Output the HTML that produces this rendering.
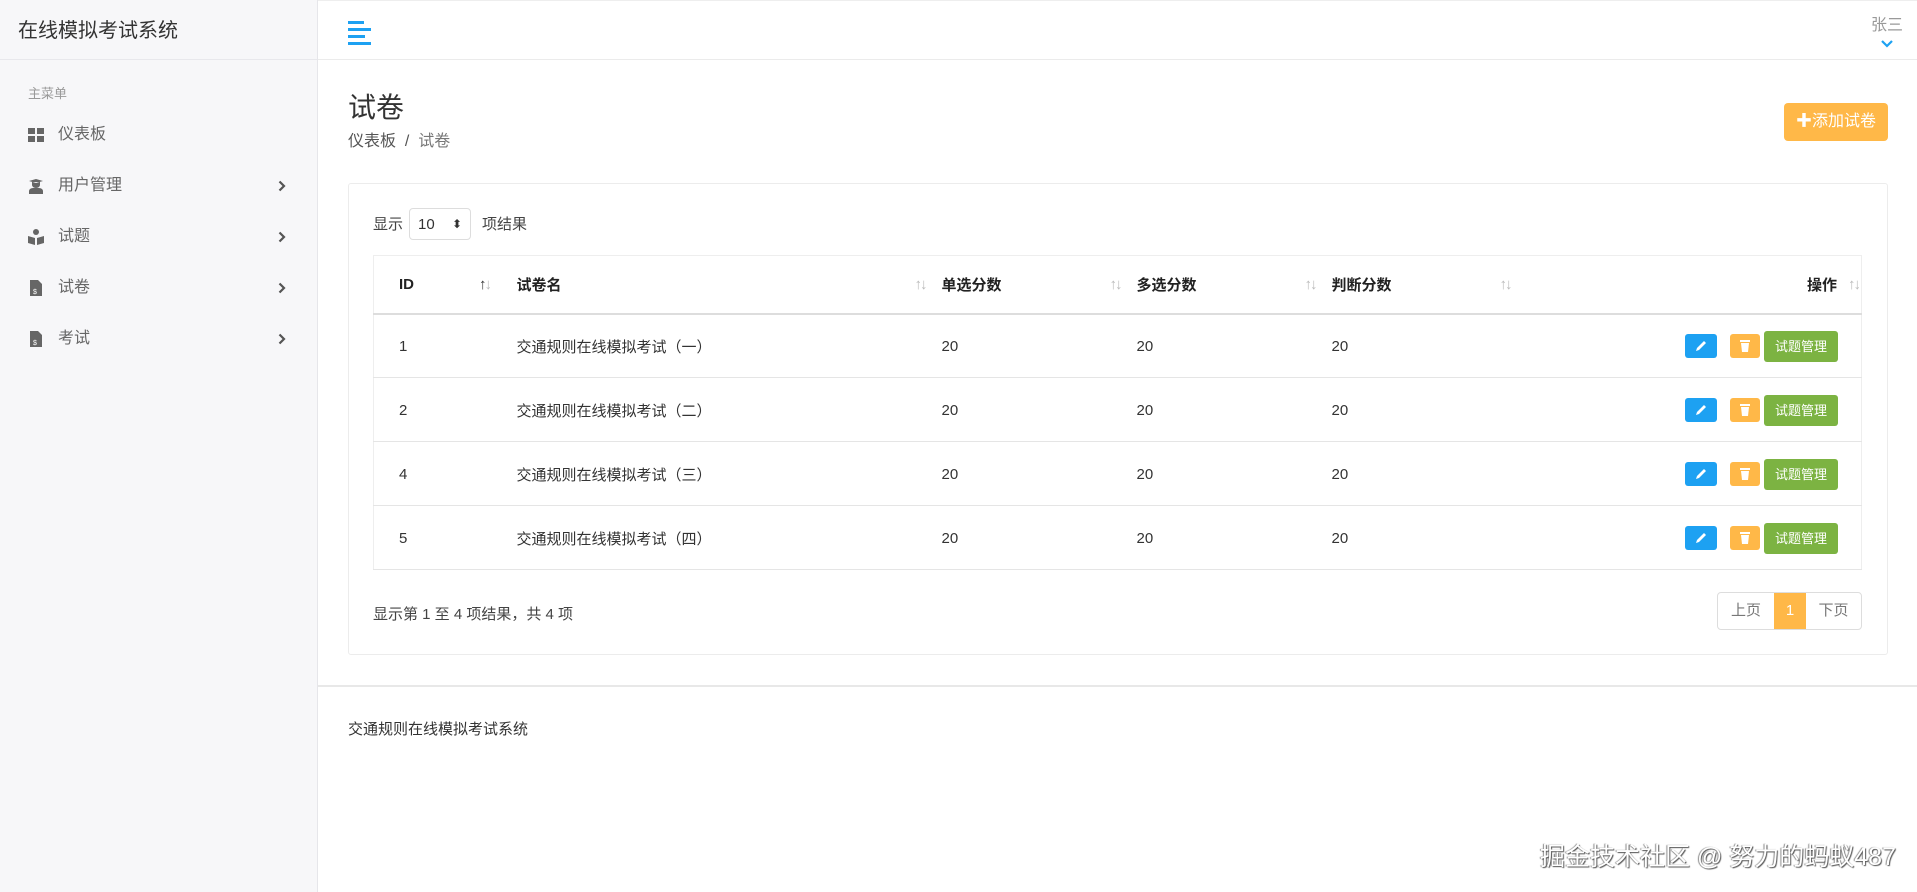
<!DOCTYPE html>
<html><head><meta charset="utf-8"><style>
*{box-sizing:border-box;margin:0;padding:0}
body{width:1917px;height:892px;overflow:hidden;background:#fff;font-family:"Liberation Sans","Noto Sans CJK SC",sans-serif;color:#333;position:relative}
.side{position:absolute;left:0;top:0;width:318px;height:892px;background:#f7f7f9;border-right:1px solid #e6e6ea}
.brand{height:60px;border-bottom:1px solid #e8e8ec;padding:14px 0 0 18px;font-size:20px;color:#333}
.menuh{position:absolute;left:28px;top:83px;font-size:13px;color:#999}
.mi{position:absolute;left:28px;width:262px;height:30px;font-size:16px;color:#666;line-height:30px}
.mi .ic{position:absolute;left:0;top:7px;width:16px;height:16px}
.mi .t{position:absolute;left:30px}
.mi .ch{position:absolute;right:4px;top:9px}
.top{position:absolute;left:318px;top:0;right:0;height:60px;border-bottom:1px solid #ebebeb;border-top:1px solid #eee}
.ham{position:absolute;left:30px;top:20px}
.ham i{display:block;height:3px;background:#1da1f2;margin-bottom:4px}
.user{position:absolute;right:14px;top:10px;color:#999;font-size:16px;text-align:center}
.h1{position:absolute;left:348px;top:86px;font-size:28px;color:#333}
.bc{position:absolute;left:348px;top:127px;font-size:16px;color:#555}
.bc span{color:#777}
.add{position:absolute;left:1784px;top:103px;width:104px;height:38px;background:#ffb848;border-radius:4px;color:#fff;font-size:16px;line-height:38px;text-align:center}
.card{position:absolute;left:348px;top:183px;width:1540px;height:472px;border:1px solid #ececec;border-radius:3px}
.show{position:absolute;left:373px;top:213px;font-size:15px;color:#444}
.sel{position:absolute;left:409px;top:208px;width:62px;height:32px;border:1px solid #ddd;border-radius:4px;font-size:15px;padding:7px 0 0 8px;color:#333}
.sel:after{content:"⬍";position:absolute;right:8px;top:8px;font-size:12px}
table{position:absolute;left:373px;top:255px;width:1489px;border-collapse:collapse;border:1px solid #eee;font-size:15px;table-layout:fixed}
th{height:58px;text-align:left;font-weight:bold;color:#222;border-bottom:2px solid #ddd;position:relative}
td{height:64px;border-bottom:1px solid #e5e5e5;color:#333;position:relative;padding-top:2px}
td:last-child{color:transparent}
.s{position:absolute;top:20px;color:#bbb;font-weight:normal;font-size:15px;letter-spacing:-2px}
.b{position:absolute;border-radius:3px;color:#fff;font-size:12px;text-align:center}
.foot1{position:absolute;left:373px;top:603px;font-size:15px;color:#444}
.pg{position:absolute;left:1717px;top:592px;width:145px;height:38px;border:1px solid #ddd;border-radius:4px;display:flex;font-size:15px;color:#777;line-height:36px}
.pg div{text-align:center}
.fl{position:absolute;left:318px;right:0;top:685px;border-top:2px solid #e8e8e8}
.ft{position:absolute;left:348px;top:718px;font-size:15px;color:#333}
.wm{position:absolute;left:1540px;top:837px;font-size:25px;color:#fff;text-shadow:1px 1px 1px #555,-1px 0 1px #888}
</style></head><body>
<div class="side">
<div class="brand">在线模拟考试系统</div>
<div class="menuh">主菜单</div>
<div class="mi" style="top:120px"><svg class="ic" viewBox="0 0 16 16"><rect x="0" y="1" width="7" height="6" fill="#666"/><rect x="9" y="1" width="7" height="6" fill="#666"/><rect x="0" y="9" width="7" height="6" fill="#666"/><rect x="9" y="9" width="7" height="6" fill="#666"/></svg><span class="t">仪表板</span></div>
<div class="mi" style="top:171px"><svg class="ic" viewBox="0 0 16 16"><path d="M1 3L8 1L15 3L8 5Z M4 4v3a4 3 0 0 0 8 0V4" fill="#666"/><path d="M1 16v-3a4 3 0 0 1 4-3h6a4 3 0 0 1 4 3v3Z" fill="#666"/></svg><span class="t">用户管理</span><svg class="ch" width="8" height="12" viewBox="0 0 8 12"><path d="M1.5 1.5l4.5 4.5-4.5 4.5" stroke="#555" stroke-width="2.2" fill="none"/></svg></div>
<div class="mi" style="top:222px"><svg class="ic" viewBox="0 0 16 16"><circle cx="8" cy="3" r="3" fill="#666"/><path d="M0 7l7 2v7l-7-2z M16 7l-7 2v7l7-2z" fill="#666"/></svg><span class="t">试题</span><svg class="ch" width="8" height="12" viewBox="0 0 8 12"><path d="M1.5 1.5l4.5 4.5-4.5 4.5" stroke="#555" stroke-width="2.2" fill="none"/></svg></div>
<div class="mi" style="top:273px"><svg class="ic" viewBox="0 0 16 16"><path d="M2 0h8l4 4v12H2z" fill="#666"/><text x="5" y="14" font-size="7" fill="#fff">$</text></svg><span class="t">试卷</span><svg class="ch" width="8" height="12" viewBox="0 0 8 12"><path d="M1.5 1.5l4.5 4.5-4.5 4.5" stroke="#555" stroke-width="2.2" fill="none"/></svg></div>
<div class="mi" style="top:324px"><svg class="ic" viewBox="0 0 16 16"><path d="M2 0h8l4 4v12H2z" fill="#666"/><text x="5" y="14" font-size="7" fill="#fff">$</text></svg><span class="t">考试</span><svg class="ch" width="8" height="12" viewBox="0 0 8 12"><path d="M1.5 1.5l4.5 4.5-4.5 4.5" stroke="#555" stroke-width="2.2" fill="none"/></svg></div>
</div>
<div class="top">
<div class="ham"><i style="width:16px"></i><i style="width:23px"></i><i style="width:17px"></i><i style="width:23px"></i></div>
<div class="user">张三<br><svg width="12" height="8" viewBox="0 0 12 8"><path d="M1 1l5 5 5-5" stroke="#1da1f2" stroke-width="2.2" fill="none"/></svg></div>
</div>
<div class="h1">试卷</div>
<div class="bc">仪表板 &nbsp;/&nbsp; <span>试卷</span></div>
<div class="add"><b>✚</b>添加试卷</div>
<div class="card"></div>
<div class="show">显示</div><div class="sel">10</div><div class="show" style="left:482px">项结果</div>
<table>
<colgroup><col style="width:143px"><col style="width:425px"><col style="width:195px"><col style="width:195px"><col style="width:195px"><col></colgroup>
<tr><th style="padding-left:25px">ID<span class="s" style="left:105px;color:#333">↑<span style="color:#bbb">↓</span></span></th>
<th>试卷名<span class="s" style="right:16px">↑↓</span></th>
<th>单选分数<span class="s" style="right:16px">↑↓</span></th>
<th>多选分数<span class="s" style="right:16px">↑↓</span></th>
<th>判断分数<span class="s" style="right:16px">↑↓</span></th>
<th style="text-align:right;padding-right:24px">操作<span class="s" style="right:2px">↑↓</span></th></tr>
<tr><td style="padding-left:25px">1</td><td>交通规则在线模拟考试（一）</td><td>20</td><td>20</td><td>20</td><td>§</td></tr>
<tr><td style="padding-left:25px">2</td><td>交通规则在线模拟考试（二）</td><td>20</td><td>20</td><td>20</td><td>§</td></tr>
<tr><td style="padding-left:25px">4</td><td>交通规则在线模拟考试（三）</td><td>20</td><td>20</td><td>20</td><td>§</td></tr>
<tr><td style="padding-left:25px">5</td><td>交通规则在线模拟考试（四）</td><td>20</td><td>20</td><td>20</td><td>§</td></tr>
</table>
<div style="position:absolute;left:1685px;top:334px"><div class="b" style="left:0;top:0;width:32px;height:24px;background:#1da1f2"><svg width="14" height="14" viewBox="0 0 14 14" style="margin-top:5px"><path d="M2 12l1-3 7-7 2 2-7 7z" fill="#fff"/></svg></div><div class="b" style="left:45px;top:0;width:30px;height:24px;background:#ffb848"><svg width="12" height="14" viewBox="0 0 12 14" style="margin-top:5px"><rect x="1" y="1" width="10" height="2" fill="#fff"/><path d="M2 4h8l-1 9H3z" fill="#fff"/></svg></div><div class="b" style="left:79px;top:-3px;width:74px;height:31px;line-height:31px;background:#7cb342;font-size:13px">试题管理</div></div>
<div style="position:absolute;left:1685px;top:398px"><div class="b" style="left:0;top:0;width:32px;height:24px;background:#1da1f2"><svg width="14" height="14" viewBox="0 0 14 14" style="margin-top:5px"><path d="M2 12l1-3 7-7 2 2-7 7z" fill="#fff"/></svg></div><div class="b" style="left:45px;top:0;width:30px;height:24px;background:#ffb848"><svg width="12" height="14" viewBox="0 0 12 14" style="margin-top:5px"><rect x="1" y="1" width="10" height="2" fill="#fff"/><path d="M2 4h8l-1 9H3z" fill="#fff"/></svg></div><div class="b" style="left:79px;top:-3px;width:74px;height:31px;line-height:31px;background:#7cb342;font-size:13px">试题管理</div></div>
<div style="position:absolute;left:1685px;top:462px"><div class="b" style="left:0;top:0;width:32px;height:24px;background:#1da1f2"><svg width="14" height="14" viewBox="0 0 14 14" style="margin-top:5px"><path d="M2 12l1-3 7-7 2 2-7 7z" fill="#fff"/></svg></div><div class="b" style="left:45px;top:0;width:30px;height:24px;background:#ffb848"><svg width="12" height="14" viewBox="0 0 12 14" style="margin-top:5px"><rect x="1" y="1" width="10" height="2" fill="#fff"/><path d="M2 4h8l-1 9H3z" fill="#fff"/></svg></div><div class="b" style="left:79px;top:-3px;width:74px;height:31px;line-height:31px;background:#7cb342;font-size:13px">试题管理</div></div>
<div style="position:absolute;left:1685px;top:526px"><div class="b" style="left:0;top:0;width:32px;height:24px;background:#1da1f2"><svg width="14" height="14" viewBox="0 0 14 14" style="margin-top:5px"><path d="M2 12l1-3 7-7 2 2-7 7z" fill="#fff"/></svg></div><div class="b" style="left:45px;top:0;width:30px;height:24px;background:#ffb848"><svg width="12" height="14" viewBox="0 0 12 14" style="margin-top:5px"><rect x="1" y="1" width="10" height="2" fill="#fff"/><path d="M2 4h8l-1 9H3z" fill="#fff"/></svg></div><div class="b" style="left:79px;top:-3px;width:74px;height:31px;line-height:31px;background:#7cb342;font-size:13px">试题管理</div></div>
<div class="foot1">显示第 1 至 4 项结果，共 4 项</div>
<div class="pg"><div style="width:56px">上页</div><div style="width:32px;background:#ffb848;color:#fff">1</div><div style="flex:1">下页</div></div>
<div class="fl"></div>
<div class="ft">交通规则在线模拟考试系统</div>
<div class="wm">掘金技术社区 @ 努力的蚂蚁487</div>
</body></html>
